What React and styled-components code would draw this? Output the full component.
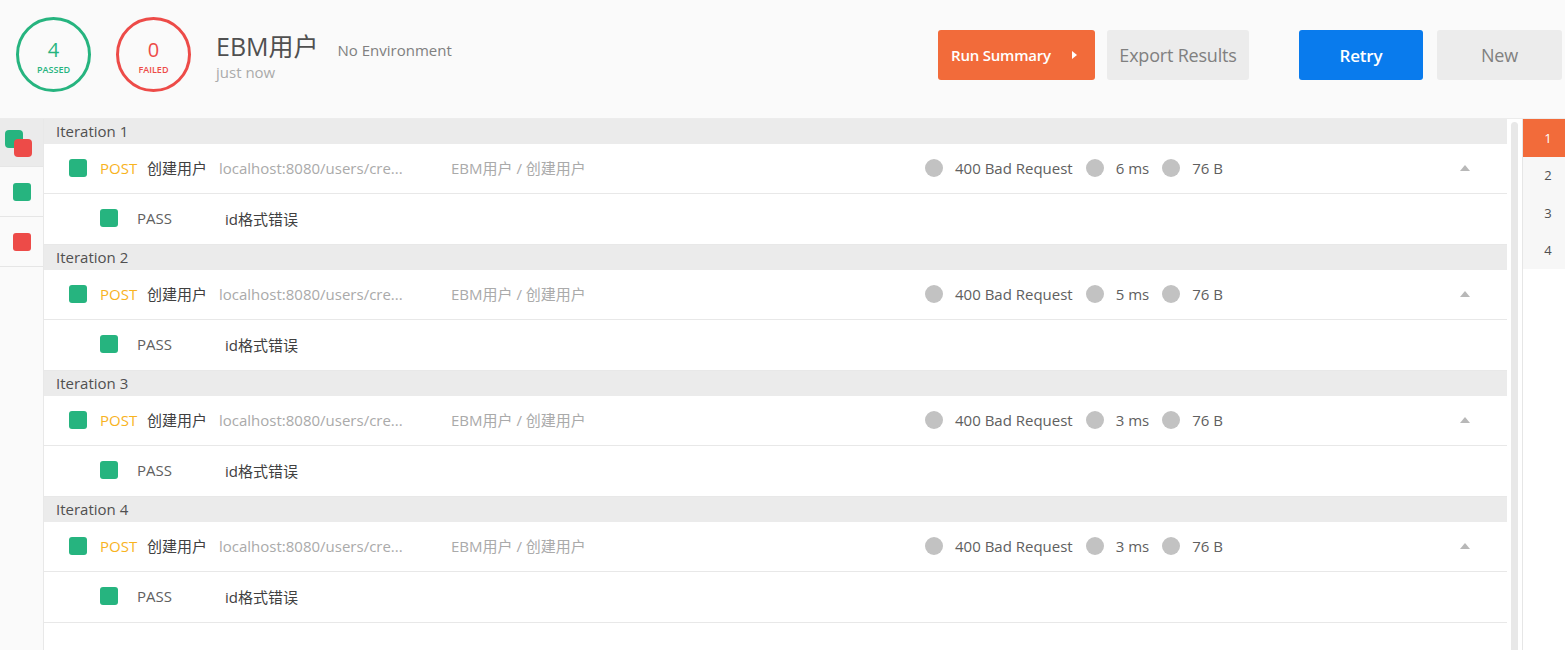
import React from 'react'
import styled, { createGlobalStyle } from 'styled-components'

const GlobalStyle = createGlobalStyle`
  html, body {
    margin: 0;
    padding: 0;
    background: #ffffff;
    font-family: "Open Sans", "Noto Sans CJK SC", sans-serif;
    color: #505050;
    overflow: hidden;
  }
  * { box-sizing: border-box; }
`

const GREEN = '#26b47f'
const RED = '#ed4b48'

const Page = styled.div`
  width: 1565px;
  height: 650px;
  display: flex;
  flex-direction: column;
`

const Header = styled.div`
  height: 119px;
  flex-shrink: 0;
  background: #fafafa;
  border-bottom: 1px solid #ececec;
  display: flex;
  align-items: flex-start;
  padding: 17px 3px 0 16px;
`

const Ring = styled.div`
  width: 75px;
  height: 75px;
  border-radius: 50%;
  border: 3px solid ${p => p.color};
  color: ${p => p.color};
  display: flex;
  flex-direction: column;
  align-items: center;
  justify-content: center;
  padding-top: 5px;
  margin-right: 25px;
  flex-shrink: 0;
`

const RingNum = styled.div`
  font-size: 20px;
  line-height: 22px;
  font-weight: 400;
`

const RingLabel = styled.div`
  font-size: 9px;
  line-height: 12px;
  font-weight: 600;
  margin-top: 3px;
`

const TitleBlock = styled.div`
  margin-top: 13px;
  display: flex;
  flex-direction: column;
`

const TitleRow = styled.div`
  display: flex;
  align-items: baseline;
`

const Title = styled.div`
  font-size: 25px;
  line-height: 32px;
  color: #505050;
`

const Env = styled.div`
  font-size: 15px;
  color: #808080;
  margin-left: 19px;
`

const When = styled.div`
  font-size: 15px;
  line-height: 20px;
  color: #aaaaaa;
`

const Actions = styled.div`
  margin-left: auto;
  margin-top: 13px;
  display: flex;
  align-items: center;
`

const Button = styled.button`
  height: 50px;
  width: ${p => p.w}px;
  margin-left: ${p => p.gap || 0}px;
  border: none;
  border-radius: 3px;
  background: ${p => p.bg};
  color: ${p => p.fg};
  font-family: "Open Sans", sans-serif;
  font-size: ${p => p.size || 18}px;
  font-weight: ${p => p.weight || 400};
  display: flex;
  align-items: center;
  justify-content: center;
  padding: 0;
  letter-spacing: -0.2px;
`

const RunButton = styled(Button)`
  justify-content: flex-start;
  padding-left: 13px;
`

const Caret = styled.span`
  width: 0;
  height: 0;
  border-top: 4px solid transparent;
  border-bottom: 4px solid transparent;
  border-left: 5px solid #ffffff;
  margin-left: 21px;
`

const Body = styled.div`
  flex: 1;
  display: flex;
  min-height: 0;
`

const Sidebar = styled.div`
  width: 44px;
  flex-shrink: 0;
  background: #fafafa;
  border-right: 1px solid #e8e8e8;
`

const SideItem = styled.div`
  height: ${p => (p.first ? 48 : 50)}px;
  border-bottom: 1px solid #e6e6e6;
  background: ${p => (p.active ? '#ebebeb' : 'transparent')};
  display: flex;
  align-items: center;
  justify-content: center;
  position: relative;
`

const Square = styled.span`
  display: inline-block;
  width: ${p => p.size || 18}px;
  height: ${p => p.size || 18}px;
  border-radius: 3px;
  background: ${p => p.color};
  flex-shrink: 0;
`

const StackSquare = styled(Square)`
  position: absolute;
  left: ${p => p.x}px;
  top: ${p => p.y}px;
  border-radius: 4px;
`

const Main = styled.div`
  flex: 1;
  overflow: hidden;
`

const IterHead = styled.div`
  height: 25px;
  background: #ebebeb;
  font-size: 15px;
  line-height: 24px;
  padding-left: 12px;
  color: #505050;
`

const Row = styled.div`
  height: ${p => p.h}px;
  border-bottom: 1px solid #e8e8e8;
  display: flex;
  align-items: center;
  padding-left: ${p => p.indent}px;
  padding-bottom: 2px;
  font-size: 15px;
  white-space: nowrap;
`

const Cell = styled.span`
  width: ${p => p.w}px;
  flex-shrink: 0;
  color: ${p => p.color || '#505050'};
  margin-left: ${p => p.gap || 0}px;
`

const Method = styled(Cell)`
  color: #f8b31e;
`

const Stat = styled.span`
  display: flex;
  align-items: center;
  color: #606060;
  margin-right: 13px;
`

const Dot = styled.span`
  width: 18px;
  height: 18px;
  border-radius: 50%;
  background: #c2c2c2;
  margin-right: 12px;
`

const UpArrow = styled.span`
  margin-left: auto;
  margin-right: 37px;
  width: 0;
  height: 0;
  border-left: 5px solid transparent;
  border-right: 5px solid transparent;
  border-bottom: 6px solid #b8b8b8;
`

const Track = styled.div`
  width: 15px;
  flex-shrink: 0;
  padding: 3px 4px 0 4px;
`

const Thumb = styled.div`
  height: 100%;
  background: #e8e8e8;
  border-radius: 4px 4px 0 0;
`

const IterNav = styled.div`
  width: 43px;
  flex-shrink: 0;
  border-left: 1px solid #e6e6e6;
`

const NavList = styled.div`
  background: #f7f7f7;
`

const NavItem = styled.div`
  height: 37.5px;
  display: flex;
  align-items: center;
  justify-content: center;
  padding-left: 8px;
  font-size: 13px;
  background: ${p => (p.active ? '#f26b3a' : 'transparent')};
  color: ${p => (p.active ? '#ffffff' : '#505050')};
`

const iterations = [
  { n: 1, time: '6 ms' },
  { n: 2, time: '5 ms' },
  { n: 3, time: '3 ms' },
  { n: 4, time: '3 ms' },
]

function Iteration({ n, time }) {
  return (
    <div>
      <IterHead>Iteration {n}</IterHead>
      <Row h={50} indent={25}>
        <Square color={GREEN} />
        <Method w={47} gap={13}>POST</Method>
        <Cell w={72} color="#404040">创建用户</Cell>
        <Cell w={232} color="#aaaaaa">localhost:8080/users/cre...</Cell>
        <Cell w={474} color="#aaaaaa">EBM用户 / 创建用户</Cell>
        <Stat><Dot />400 Bad Request</Stat>
        <Stat><Dot />{time}</Stat>
        <Stat><Dot />76 B</Stat>
        <UpArrow />
      </Row>
      <Row h={51} indent={56}>
        <Square color={GREEN} />
        <Cell w={88} gap={19} color="#606060">PASS</Cell>
        <Cell w={200} color="#404040">id格式错误</Cell>
      </Row>
    </div>
  )
}

export default function App() {
  return (
    <Page>
      <GlobalStyle />
      <Header>
        <Ring color={GREEN}>
          <RingNum>4</RingNum>
          <RingLabel>PASSED</RingLabel>
        </Ring>
        <Ring color={RED}>
          <RingNum>0</RingNum>
          <RingLabel>FAILED</RingLabel>
        </Ring>
        <TitleBlock>
          <TitleRow>
            <Title>EBM用户</Title>
            <Env>No Environment</Env>
          </TitleRow>
          <When>just now</When>
        </TitleBlock>
        <Actions>
          <RunButton w={157} bg="#f26b3a" fg="#ffffff" size={15} weight={600}>
            Run Summary<Caret />
          </RunButton>
          <Button w={142} gap={12} bg="#ececec" fg="#808080">Export Results</Button>
          <Button w={124} gap={50} bg="#097bed" fg="#ffffff" size={17} weight={600}>Retry</Button>
          <Button w={125} gap={14} bg="#ececec" fg="#808080">New</Button>
        </Actions>
      </Header>
      <Body>
        <Sidebar>
          <SideItem first active>
            <StackSquare color={GREEN} x={5} y={11} />
            <StackSquare color={RED} x={14} y={20} />
          </SideItem>
          <SideItem><Square color={GREEN} /></SideItem>
          <SideItem><Square color={RED} /></SideItem>
        </Sidebar>
        <Main>
          {iterations.map(it => <Iteration key={it.n} {...it} />)}
        </Main>
        <Track><Thumb /></Track>
        <IterNav>
          <NavList>
            {iterations.map(it => (
              <NavItem key={it.n} active={it.n === 1}>{it.n}</NavItem>
            ))}
          </NavList>
        </IterNav>
      </Body>
    </Page>
  )
}
